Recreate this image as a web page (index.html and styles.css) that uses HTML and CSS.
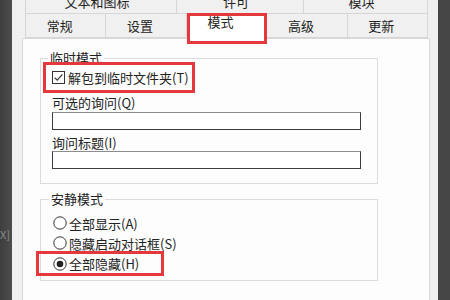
FILE: index.html
```html
<!DOCTYPE html>
<html lang="zh-CN">
<head>
    <meta charset="UTF-8">
    <title>模式</title>
    <link rel="stylesheet" href="styles.css">
</head>
<body>
    <div class="screen">
        <div class="edge left"><span class="ghost">X]</span></div>
        <div class="dialog">
            <div class="tabs top">
                <div class="tab wide">文本和图标</div>
                <div class="tab mid">许可</div>
                <div class="tab narrow">模块</div>
            </div>
            <div class="tabs">
                <div class="tab">常规</div>
                <div class="tab">设置</div>
                <div class="tab active">模式</div>
                <div class="tab">高级</div>
                <div class="tab">更新</div>
            </div>
            <div class="panel">
                <fieldset class="group temp">
                    <legend>临时模式</legend>
                    <label class="check mark">
                        <svg width="13" height="13" viewBox="0 0 13 13">
                            <rect x="0.5" y="0.5" width="12" height="12" fill="#fff" stroke="#333"/>
                            <path d="M2.6 6.6 L5.2 9.2 L10.4 3.4" fill="none" stroke="#333" stroke-width="1.2"/>
                        </svg>
                        解包到临时文件夹(T)
                    </label>
                    <div class="field-label">可选的询问(Q)</div>
                    <div class="input"></div>
                    <div class="field-label second">询问标题(I)</div>
                    <div class="input"></div>
                </fieldset>
                <fieldset class="group quiet">
                    <legend>安静模式</legend>
                    <label class="radio">
                        <svg width="14" height="14" viewBox="0 0 14 14">
                            <circle cx="7" cy="7" r="6.2" fill="#fff" stroke="#333"/>
                        </svg>
                        全部显示(A)
                    </label>
                    <label class="radio">
                        <svg width="14" height="14" viewBox="0 0 14 14">
                            <circle cx="7" cy="7" r="6.2" fill="#fff" stroke="#333"/>
                        </svg>
                        隐藏启动对话框(S)
                    </label>
                    <label class="radio mark chosen">
                        <svg width="14" height="14" viewBox="0 0 14 14">
                            <circle cx="7" cy="7" r="6.2" fill="#fff" stroke="#333"/>
                            <circle cx="7" cy="7" r="3.3" fill="#222"/>
                        </svg>
                        全部隐藏(H)
                    </label>
                </fieldset>
            </div>
        </div>
        <div class="edge right"></div>
    </div>
</body>
</html>
```

FILE: styles.css
```css
body {
    margin: 0;
    background: #474747;
    font-family: "Noto Sans CJK SC", "Microsoft YaHei", sans-serif;
    font-size: 13px;
    color: #222;
}
.screen {
    display: flex;
    height: 300px;
    overflow: hidden;
}
.edge {
    width: 12px;
    background: linear-gradient(to right, #3e3e3e, #4d4d4d);
}
.edge.right {
    background: #454545;
}
.ghost {
    display: block;
    margin-top: 226px;
    font-size: 11px;
    color: #8a8a8a;
}
.dialog {
    flex: 1;
    display: flex;
    flex-direction: column;
    background: #f0f0f0;
    padding: 0 8px 0 10px;
}
.tabs {
    display: flex;
    margin: 0 2px 0 3px;
}
.tabs.top {
    margin-top: -11px;
}
.tab {
    flex: 1;
    height: 24px;
    box-sizing: border-box;
    display: flex;
    align-items: center;
    justify-content: center;
    padding-right: 12px;
    border-left: 1px solid #d6d6d6;
    border-bottom: 1px solid #d6d6d6;
    background: #f0f0f0;
}
.tab:last-child {
    border-right: 1px solid #d6d6d6;
}
.tabs.top .tab {
    height: 25px;
    padding-right: 8px;
}
.tab.wide { flex: 0 0 151px; }
.tab.mid { flex: 0 0 127px; }
.tab.narrow { flex: 1; }
.tab.active {
    position: relative;
    z-index: 1;
    background: #fff;
    border-bottom: none;
    margin-bottom: -1px;
    height: 25px;
    padding-bottom: 10px;
}
.tab.active::after {
    content: "";
    position: absolute;
    top: -1px;
    left: 0;
    right: -1px;
    bottom: -5px;
    border: 3px solid #e4393c;
}
.panel {
    flex: 1;
    background: #fdfdfd;
    border: 1px solid #d9d9d9;
    border-bottom: none;
    padding: 11px 51px 0 17px;
}
.group {
    margin: 0;
    border: 1px solid #dcdcdc;
    padding: 0 16px 14px 11px;
}
.group legend {
    padding: 0 2px;
    margin-left: -4px;
    line-height: 16px;
}
.mark {
    border: 3px solid #e4393c;
    box-sizing: border-box;
}
.check {
    display: inline-flex;
    align-items: center;
    gap: 3px;
    height: 31px;
    margin: -4px 0 0 -9px;
    padding: 0 3px 0 6px;
}
.field-label {
    margin-top: 2px;
    line-height: 16px;
}
.field-label.second {
    margin-top: 5px;
    line-height: 15px;
}
.input {
    height: 18px;
    margin-top: 1px;
    box-sizing: border-box;
    background: #fff;
    border: 1px solid #3c3c3c;
    border-top-color: #8c8c8c;
}
.group.quiet {
    margin-top: 7px;
    padding: 6px 16px 4px 12px;
}
.radio {
    display: flex;
    align-items: center;
    gap: 2px;
    height: 20px;
}
.radio.chosen {
    width: 128px;
    height: 25px;
    margin: -2px 0 0 -17px;
    padding-left: 14px;
}
```
